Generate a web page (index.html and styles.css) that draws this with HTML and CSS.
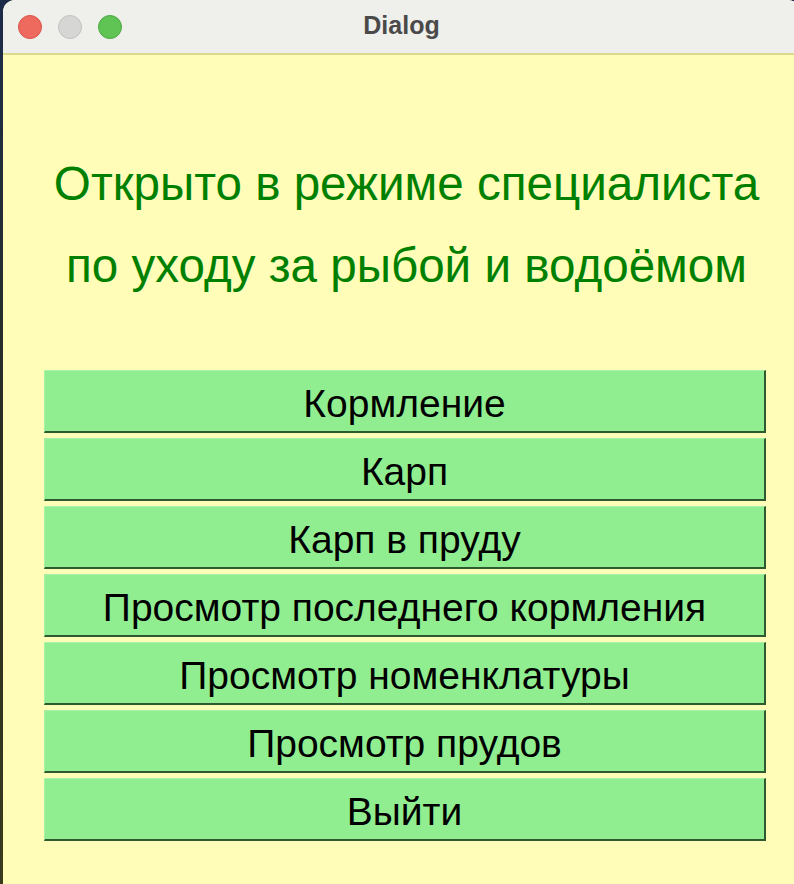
FILE: index.html
```html
<!DOCTYPE html>
<html lang="ru">
<head>
<meta charset="utf-8">
<title>Dialog</title>
<link rel="stylesheet" href="styles.css">
</head>
<body>
<div class="desktop">
  <div class="window">
    <div class="titlebar">
      <div class="lights">
        <span class="light red"></span>
        <span class="light gray"></span>
        <span class="light green"></span>
      </div>
      <div class="title">Dialog</div>
    </div>
    <div class="content">
      <div class="heading">
        <p>Открыто в режиме специалиста</p>
        <p>по уходу за рыбой и водоёмом</p>
      </div>
      <div class="buttons">
        <button class="btn">Кормление</button>
        <button class="btn">Карп</button>
        <button class="btn">Карп в пруду</button>
        <button class="btn">Просмотр последнего кормления</button>
        <button class="btn">Просмотр номенклатуры</button>
        <button class="btn">Просмотр прудов</button>
        <button class="btn">Выйти</button>
      </div>
    </div>
  </div>
</div>
</body>
</html>
```

FILE: styles.css
```css
html, body {
  margin: 0;
  padding: 0;
  width: 794px;
  height: 884px;
  overflow: hidden;
  background: #1b2a44;
}

.desktop {
  width: 794px;
  height: 884px;
  padding-left: 3px;
  box-sizing: border-box;
  background: linear-gradient(180deg, #1c2b4a 0%, #2a2e22 50%, #3a3a1e 100%);
}

.window {
  width: 797px;
  height: 884px;
  border-radius: 12px 12px 0 0;
  overflow: hidden;
  background: #fffdb8;
  display: flex;
  flex-direction: column;
}

.titlebar {
  height: 53px;
  flex: none;
  background: #efefeb;
  border-bottom: 2px solid #dcd98e;
  display: flex;
  align-items: center;
  position: relative;
}

.lights {
  display: flex;
  gap: 16px;
  padding-left: 15px;
}

.light {
  width: 24px;
  height: 24px;
  border-radius: 50%;
  box-sizing: border-box;
}

.light.red { background: #ee6a5f; border: 1px solid #d9534a; }
.light.gray { background: #d6d6d5; border: 1px solid #c2c2c0; }
.light.green { background: #5fc453; border: 1px solid #4ca843; }

.title {
  position: absolute;
  left: 0;
  right: 0;
  top: 0;
  height: 53px;
  line-height: 51px;
  text-align: center;
  font-family: "Liberation Sans", Arial, sans-serif;
  font-weight: bold;
  font-size: 25px;
  color: #4a4a4a;
}

.content {
  flex: 1;
  display: flex;
  flex-direction: column;
  padding: 0 29px 0 41px;
}

.heading {
  padding-top: 88px;
  text-align: center;
  font-family: "Liberation Sans", Arial, sans-serif;
  font-size: 47.6px;
  color: #008000;
  width: 725px;
}

.heading p {
  margin: 0;
  height: 82px;
  line-height: 82px;
  white-space: nowrap;
}

.buttons {
  margin-top: 63px;
  display: flex;
  flex-direction: column;
  gap: 5px;
  width: 722px;
}

.btn {
  height: 63px;
  margin: 0;
  padding: 5px 0 0 0;
  background: #90ee90;
  border: none;
  border-top: 1px solid #a6f2a6;
  border-left: 1px solid #a6f2a6;
  border-right: 2px solid #2f5a2f;
  border-bottom: 2px solid #2f5a2f;
  font-family: "Liberation Sans", Arial, sans-serif;
  font-size: 39px;
  color: #000;
  text-align: center;
  white-space: nowrap;
}
```
